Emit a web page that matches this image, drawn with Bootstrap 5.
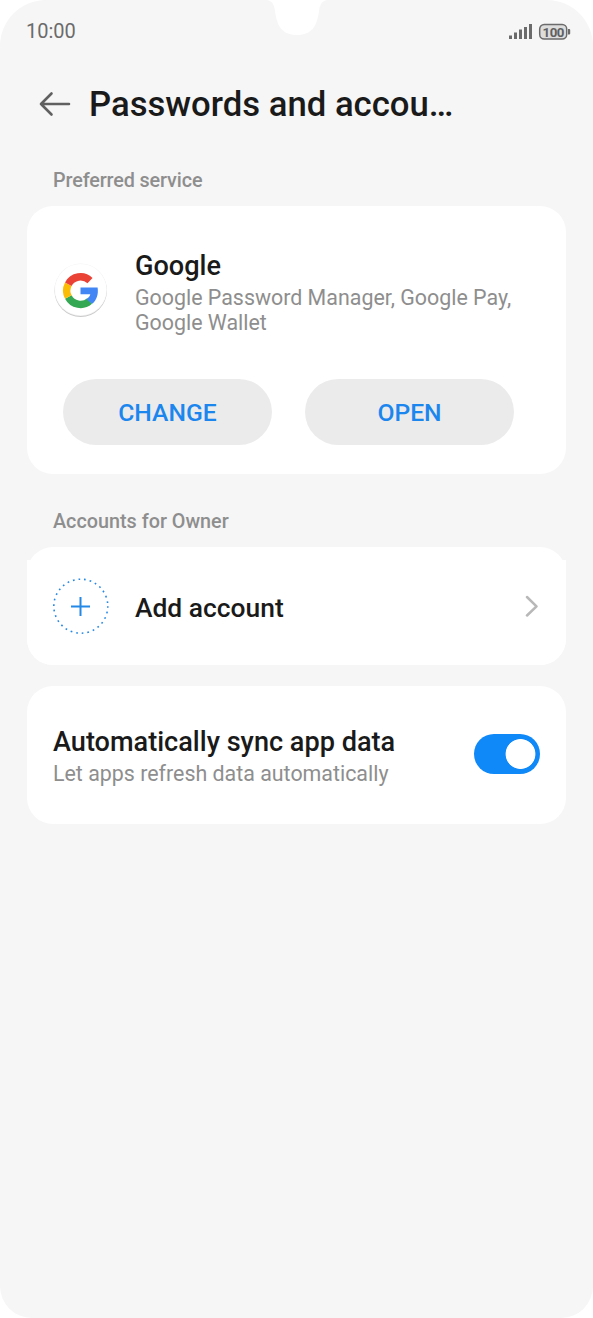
<!DOCTYPE html>
<html lang="en">
<head>
<meta charset="utf-8">
<meta name="viewport" content="width=device-width, initial-scale=1">
<title>Passwords and accounts</title>
<link rel="stylesheet" href="https://cdn.jsdelivr.net/npm/bootstrap@5.3.0/dist/css/bootstrap.min.css">
<style>
body{background:#fff;font-family:Roboto,"Noto Sans",sans-serif;color:#1a1a1a}
svg{display:block;flex:none}
.screen{height:1318px;background:#f6f6f6;border-radius:46px 46px 32px 32px;padding:0 27px;overflow:hidden}
.notch{top:0;left:267px}
.status{height:62px;font-size:20px;color:#6b6b6b;margin:0 -5px 0 -1px}
.topbar{height:84px;padding-left:12px;gap:18px}
.page-title{font-size:34.7px;font-weight:500;line-height:40px;white-space:nowrap}
.label-row{font-size:19.8px;font-weight:500;line-height:24px;color:#8e8e8e;padding-left:26px}
.label-first{margin:23px 0 13px;letter-spacing:-.13px}
.label-second{margin:36px 0 13px}
.panel{--bs-card-border-radius:26px;--bs-card-border-width:0}
.service{height:268px}
.service-row{padding:44px 0 0 26px}
.service-logo{margin:13px 26px 0 0}
.service-actions{gap:33px;margin:44px 0 0 36px}
.item-title{font-size:27.1px;font-weight:500;line-height:32px;white-space:nowrap}
.item-sub{font-size:21.4px;line-height:25px;color:#8e8e8e;white-space:nowrap;margin-top:3px}
.pill{--bs-btn-color:#1b86ee;--bs-btn-bg:#ebebeb;--bs-btn-hover-bg:#e0e0e0;--bs-btn-hover-color:#1b86ee;--bs-btn-border-width:0;--bs-btn-font-weight:500;--bs-btn-font-size:24.7px;padding:1px 0 0;width:209px;height:66px}
.account{height:118px}
.account-row{margin-top:13px;height:105px;border-radius:0 0 26px 26px;padding:0 27px 13px 26px}
.account-name{margin:3px 0 0 26px;font-size:26.4px}
.sync{height:138px;margin-top:21px;padding:0 26px}
.sync .item-sub{margin-top:3px}
.sync-text{padding-top:1px}
.sync .form-switch{min-height:0;padding:0}
.sync .form-check-input{width:66px;height:40px;margin:0;float:none;display:block;border:0;background-color:#0f88f8;background-image:radial-gradient(circle at 46.5px 20px,#fff 14.5px,transparent 15.3px);background-size:100% 100%;background-position:0 0}
</style>
<script src="https://cdn.jsdelivr.net/npm/bootstrap@5.3.0/dist/js/bootstrap.bundle.min.js"></script>
</head>
<body>
<main class="screen position-relative">
  <svg class="notch position-absolute" width="60" height="36" viewBox="0 0 60 36"><path d="M0 0C5 1 7 4 8 11C10 26 15 35 30 35S50 26 52 11C53 4 55 1 60 0Z" fill="#fff"/></svg>
  <div class="status d-flex justify-content-between align-items-center">
    <span>10:00</span>
    <svg width="62" height="20" viewBox="0 0 62 20" fill="#6b6b6b"><path d="M0 14.500h3V18H0zM5 11.500h3V18H5zM10 8.500h3V18h-3zM15 6h3v12h-3zM20 3h3v15h-3z"/><rect x="30.700" y="3.500" width="27" height="14.500" rx="4.500" fill="#ddd" stroke="#6b6b6b" stroke-width="1.500"/><path d="M59 8h1.200q1 0 1 1v3.500q0 1-1 1H59z"/><text x="44.500" y="15.500" text-anchor="middle" font-size="13.300" font-weight="700" textLength="22" fill="#606060">100</text></svg>
  </div>
  <header class="topbar d-flex align-items-center">
    <svg width="32" height="26" viewBox="0 0 32 26" fill="none" stroke="#606060" stroke-width="2.600" stroke-linecap="round" stroke-linejoin="round"><path d="M30 13H2M12.500 2.500 2 13l10.500 10.500"/></svg>
    <h1 class="page-title m-0">Passwords and accou…</h1>
  </header>
  <h2 class="label-row label-first">Preferred service</h2>
  <section class="card panel service">
    <div class="service-row d-flex align-items-start">
      <svg class="service-logo" width="56" height="60" viewBox="0 0 56 60">
        <circle cx="27.700" cy="27.800" r="26.200" fill="#c9c9c9"/><circle cx="27.700" cy="26.800" r="26.200" fill="#f3f3f3"/><circle cx="27.700" cy="26.600" r="25.700" fill="#fff"/>
        <g transform="translate(27.500 27.600)" fill="none" stroke-width="7.400">
          <path stroke="#34a853" d="M-12.200 6.400A13.800 13.800 0 0 0 9.100 10.400"/>
          <path stroke="#fbbc05" d="M-12.200-6.400A13.800 13.800 0 0 0-12.200 6.400"/>
          <path stroke="#ea4335" d="M9.500-10A13.800 13.800 0 0 0-12.200-6.400"/>
          <path fill="#4285f4" d="M0-3.200H17.100C18.100 3.600 16.200 9.400 11.600 13.200L5.900 8.600C8 7.300 9.300 5.600 9.800 3.700H0Z"/>
        </g>
      </svg>
      <div><div class="item-title">Google</div><div class="item-sub">Google Password Manager, Google Pay,<br>Google Wallet</div></div>
    </div>
    <div class="service-actions d-flex">
      <button class="btn pill rounded-pill">CHANGE</button>
      <button class="btn pill rounded-pill">OPEN</button>
    </div>
  </section>
  <h2 class="label-row label-second">Accounts for Owner</h2>
  <section class="card panel account">
    <div class="account-row bg-white d-flex align-items-center">
      <svg width="56" height="56" viewBox="0 0 56 56" fill="none" stroke="#2488e6"><circle cx="27.800" cy="28.200" r="27" stroke-width="1.600" stroke-dasharray="1.700 3.955"/><path d="M18 28.500h19M27.500 19v19" stroke-width="2"/></svg>
      <div class="item-title account-name flex-grow-1">Add account</div>
      <svg width="14" height="22" viewBox="0 0 14 22" fill="none" stroke="#b8b8b8" stroke-width="2.500" stroke-linecap="round" stroke-linejoin="round"><path d="M2 2l9.500 9.300L2 20.500"/></svg>
    </div>
  </section>
  <section class="card panel sync flex-row align-items-center justify-content-between">
    <div class="sync-text"><div class="item-title">Automatically sync app data</div><div class="item-sub">Let apps refresh data automatically</div></div>
    <div class="form-check form-switch"><input class="form-check-input" type="checkbox" role="switch" checked aria-label="Automatically sync app data"></div>
  </section>
</main>
</body>
</html>
